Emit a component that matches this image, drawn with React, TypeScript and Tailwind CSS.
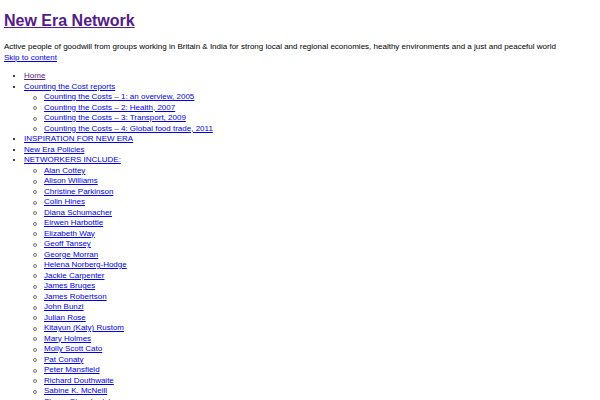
const reports = [
  "Counting the Costs – 1: an overview, 2005",
  "Counting the Costs – 2: Health, 2007",
  "Counting the Costs – 3: Transport, 2009",
  "Counting the Costs – 4: Global food trade, 2011",
];

const networkers = [
  "Alan Cottey",
  "Alison Williams",
  "Christine Parkinson",
  "Colin Hines",
  "Diana Schumacher",
  "Eirwen Harbottle",
  "Elizabeth Way",
  "Geoff Tansey",
  "George Morran",
  "Helena Norberg-Hodge",
  "Jackie Carpenter",
  "James Bruges",
  "James Robertson",
  "John Bunzl",
  "Julian Rose",
  "Kitayun (Katy) Rustom",
  "Mary Holmes",
  "Molly Scott Cato",
  "Pat Conaty",
  "Peter Mansfield",
  "Richard Douthwaite",
  "Sabine K. McNeill",
  "Shaun Chamberlain",
];

function Link({ children, visited }: { children: React.ReactNode; visited?: boolean }) {
  return (
    <a
      href="#"
      className={visited ? "underline text-[#551a8b]" : "underline text-[#0000ee]"}
    >
      {children}
    </a>
  );
}

// nested items get a hollow circle bullet a bit larger than the 8px default
function SubItem({ children }: { children: React.ReactNode }) {
  return (
    <li className="relative before:absolute before:left-[-11px] before:top-[3.5px] before:h-[4px] before:w-[4px] before:rounded-full before:border before:border-[#777] before:content-['']">
      {children}
    </li>
  );
}

export default function App() {
  return (
    <div
      className="min-h-screen bg-white px-[4px] pt-[12px] text-black text-[8px] leading-[10.5px]"
      style={{ fontFamily: '"Liberation Sans", Arial, sans-serif' }}
    >
      <h1 className="text-[16px] leading-[18px] font-bold">
        <a href="#" className="underline text-[#551a8b]">
          New Era Network
        </a>
      </h1>
      <p className="mt-[12px]">
        Active people of goodwill from groups working in Britain &amp; India for strong local and
        regional economies, healthy environments and a just and peaceful world
      </p>
      <Link>Skip to content</Link>

      <ul className="list-disc pl-[20px] my-[8px]">
        <li>
          <Link visited>Home</Link>
        </li>
        <li>
          <Link>Counting the Cost reports</Link>
          <ul className="list-none pl-[20px]">
            {reports.map((r) => (
              <SubItem key={r}>
                <Link>{r}</Link>
              </SubItem>
            ))}
          </ul>
        </li>
        <li>
          <Link>INSPIRATION FOR NEW ERA</Link>
        </li>
        <li>
          <Link>New Era Policies</Link>
        </li>
        <li>
          <Link>NETWORKERS INCLUDE:</Link>
          <ul className="list-none pl-[20px]">
            {networkers.map((n) => (
              <SubItem key={n}>
                <Link>{n}</Link>
              </SubItem>
            ))}
          </ul>
        </li>
      </ul>
    </div>
  );
}
